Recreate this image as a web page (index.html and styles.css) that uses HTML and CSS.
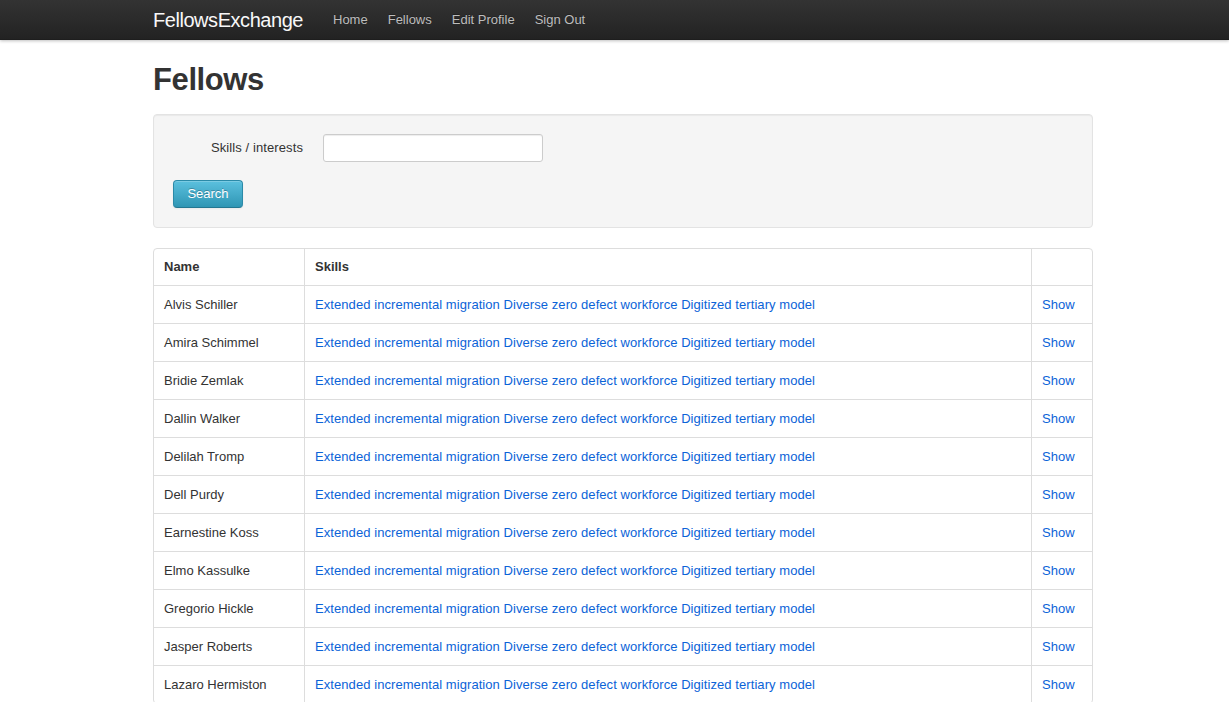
FILE: index.html
```html
<!DOCTYPE html>
<html lang="en">
<head>
<meta charset="utf-8">
<title>FellowsExchange</title>
<link rel="stylesheet" href="styles.css">
</head>
<body>
<header class="navbar">
  <div class="container nav-inner">
    <a class="brand" href="#">FellowsExchange</a>
    <nav class="nav">
      <a href="#">Home</a>
      <a href="#">Fellows</a>
      <a href="#">Edit Profile</a>
      <a href="#">Sign Out</a>
    </nav>
  </div>
</header>
<main class="container">
  <h1 class="title">Fellows</h1>
  <form class="well">
    <div class="control-group">
      <label class="control-label" for="q">Skills / interests</label>
      <input class="text-input" id="q" type="text">
    </div>
    <div class="actions">
      <button class="btn-info" type="button">Search</button>
    </div>
  </form>
  <table class="table">
    <thead>
      <tr><th class="c-name">Name</th><th class="c-skills">Skills</th><th class="c-show"></th></tr>
    </thead>
    <tbody>
      <tr><td>Alvis Schiller</td><td><a href="#">Extended incremental migration</a> <a href="#">Diverse zero defect workforce</a> <a href="#">Digitized tertiary model</a></td><td><a href="#">Show</a></td></tr>
      <tr><td>Amira Schimmel</td><td><a href="#">Extended incremental migration</a> <a href="#">Diverse zero defect workforce</a> <a href="#">Digitized tertiary model</a></td><td><a href="#">Show</a></td></tr>
      <tr><td>Bridie Zemlak</td><td><a href="#">Extended incremental migration</a> <a href="#">Diverse zero defect workforce</a> <a href="#">Digitized tertiary model</a></td><td><a href="#">Show</a></td></tr>
      <tr><td>Dallin Walker</td><td><a href="#">Extended incremental migration</a> <a href="#">Diverse zero defect workforce</a> <a href="#">Digitized tertiary model</a></td><td><a href="#">Show</a></td></tr>
      <tr><td>Delilah Tromp</td><td><a href="#">Extended incremental migration</a> <a href="#">Diverse zero defect workforce</a> <a href="#">Digitized tertiary model</a></td><td><a href="#">Show</a></td></tr>
      <tr><td>Dell Purdy</td><td><a href="#">Extended incremental migration</a> <a href="#">Diverse zero defect workforce</a> <a href="#">Digitized tertiary model</a></td><td><a href="#">Show</a></td></tr>
      <tr><td>Earnestine Koss</td><td><a href="#">Extended incremental migration</a> <a href="#">Diverse zero defect workforce</a> <a href="#">Digitized tertiary model</a></td><td><a href="#">Show</a></td></tr>
      <tr><td>Elmo Kassulke</td><td><a href="#">Extended incremental migration</a> <a href="#">Diverse zero defect workforce</a> <a href="#">Digitized tertiary model</a></td><td><a href="#">Show</a></td></tr>
      <tr><td>Gregorio Hickle</td><td><a href="#">Extended incremental migration</a> <a href="#">Diverse zero defect workforce</a> <a href="#">Digitized tertiary model</a></td><td><a href="#">Show</a></td></tr>
      <tr><td>Jasper Roberts</td><td><a href="#">Extended incremental migration</a> <a href="#">Diverse zero defect workforce</a> <a href="#">Digitized tertiary model</a></td><td><a href="#">Show</a></td></tr>
      <tr><td>Lazaro Hermiston</td><td><a href="#">Extended incremental migration</a> <a href="#">Diverse zero defect workforce</a> <a href="#">Digitized tertiary model</a></td><td><a href="#">Show</a></td></tr>
    </tbody>
  </table>
</main>
</body>
</html>
```
FILE: styles.css
```css
html, body {
  margin: 0;
  padding: 0;
}
body {
  font-family: "Liberation Sans", Arial, Helvetica, sans-serif;
  font-size: 13px;
  line-height: 18px;
  color: #333;
  background: #fff;
}
a {
  color: #0b63d8;
  text-decoration: none;
}
.container {
  width: 940px;
  margin: 0 0 0 153px;
}
.navbar {
  height: 40px;
  background: linear-gradient(to bottom, #333333, #222222);
  box-shadow: 0 1px 3px rgba(0, 0, 0, 0.25), inset 0 -1px 0 rgba(0, 0, 0, 0.1);
}
.nav-inner {
  display: flex;
  align-items: center;
  height: 40px;
}
.brand {
  color: #f8f8f8;
  font-size: 20px;
  line-height: 40px;
  padding-right: 20px;
  letter-spacing: -0.45px;
}
.nav {
  display: flex;
}
.nav a {
  color: #bdbdbd;
  padding: 0 10px;
  line-height: 40px;
  text-shadow: 0 -1px 0 rgba(0, 0, 0, 0.25);
}
.title {
  font-size: 31px;
  line-height: 36px;
  font-weight: bold;
  color: #333;
  margin: 22px 0 16px;
  letter-spacing: -0.4px;
}
.well {
  background: #f5f5f5;
  border: 1px solid #e3e3e3;
  border-radius: 4px;
  box-shadow: inset 0 1px 1px rgba(0, 0, 0, 0.05);
  padding: 19px;
  margin: 0 0 20px;
  display: flex;
  flex-direction: column;
  gap: 18px;
}
.control-group {
  display: flex;
  align-items: center;
  gap: 20px;
}
.control-label {
  width: 130px;
  text-align: right;
  letter-spacing: 0.1px;
}
.text-input {
  box-sizing: border-box;
  width: 220px;
  height: 28px;
  border: 1px solid #cccccc;
  border-radius: 3px;
  box-shadow: inset 0 1px 1px rgba(0, 0, 0, 0.075);
  background: #fff;
  font: inherit;
  padding: 4px;
  margin: 0;
}
.actions {
  display: flex;
}
.btn-info {
  box-sizing: border-box;
  width: 70px;
  height: 28px;
  border: 1px solid #2b8aa8;
  border-bottom-color: #237791;
  border-radius: 4px;
  background: linear-gradient(to bottom, #5bc0de, #2f96b4);
  box-shadow: inset 0 1px 0 rgba(255, 255, 255, 0.2), 0 1px 2px rgba(0, 0, 0, 0.05);
  color: #fff;
  font: inherit;
  text-shadow: 0 -1px 0 rgba(0, 0, 0, 0.25);
  padding: 0;
  margin: 0;
}
.table {
  width: 940px;
  border: 1px solid #dddddd;
  border-radius: 4px;
  border-collapse: separate;
  border-spacing: 0;
}
.table th,
.table td {
  text-align: left;
  padding: 8px 10px;
  line-height: 21px;
  border-left: 1px solid #dddddd;
  border-top: 1px solid #dddddd;
  vertical-align: top;
}
.table td a {
  letter-spacing: 0.07px;
}
.table th {
  font-weight: bold;
  line-height: 20px;
}
.table thead th {
  border-top: 0;
}
.table tr > :first-child {
  border-left: 0;
}
.c-name {
  width: 130px;
}
.c-show {
  width: 40px;
}
```
